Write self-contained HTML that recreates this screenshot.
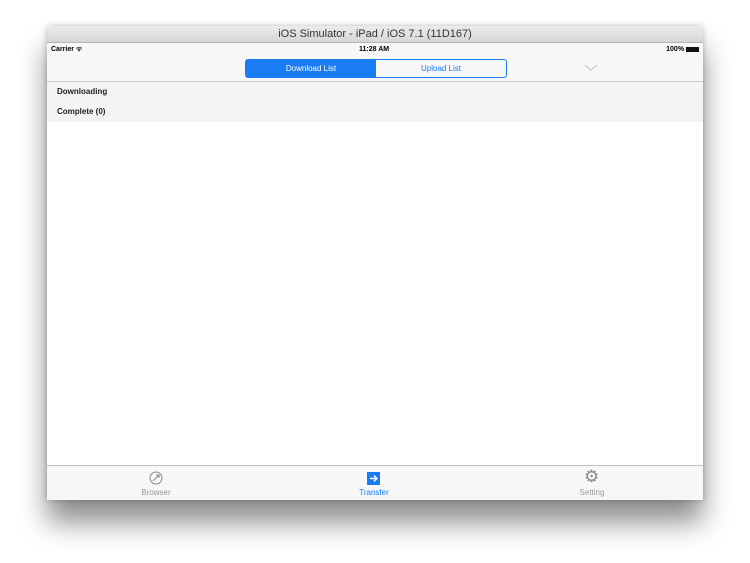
<!DOCTYPE html><html><head><style>
body{margin:0;width:750px;height:563px;background:#fff;font-family:"Liberation Sans",sans-serif;position:relative;overflow:hidden}
#w{position:absolute;left:47px;top:26px;width:656px;height:474px;background:#fff;box-shadow:0 22px 28px rgba(0,0,0,.45),0 0 6px rgba(0,0,0,.25);border-radius:4px 4px 0 0;overflow:hidden}
#t{height:16px;background:linear-gradient(#ececec,#d6d6d6);border-bottom:1px solid #b5b5b5;text-align:center;font-size:11px;line-height:16px;color:#333}
#s{height:13px;background:#f7f7f7;font-size:7px;font-weight:bold;line-height:13px;position:relative}
#n{height:25px;background:#f7f7f7;border-bottom:1px solid #c8c8c8;position:relative}
.seg{position:absolute;left:198px;top:3px;width:260px;height:17px;border:1px solid #1a7cf5;border-radius:3px;font-size:8px;line-height:17px;text-align:center}
.seg div{position:absolute;top:0;height:17px;width:130px}
.r{height:20px;background:#f4f4f4;font-size:8px;font-weight:bold;line-height:19px;padding-left:10px;color:#222}
#tb{position:absolute;left:0;top:439px;width:656px;height:35px;background:#f7f7f7;border-top:1px solid #c0c0c0;font-size:8px;color:#999}
.ti{position:absolute;top:22px;width:80px;text-align:center}
</style></head><body><div id="w">
<div id="t">iOS Simulator - iPad / iOS 7.1 (11D167)</div>
<div id="s"><span style="position:absolute;left:4px">Carrier ᯤ</span><span style="position:absolute;left:312px">11:28 AM</span><span style="position:absolute;right:4px">100% <span style="display:inline-block;width:13px;height:5px;background:#111;vertical-align:middle"></span></span></div>
<div id="n"><div class="seg"><div style="left:0;background:#1a7cf5;color:#fff">Download List</div><div style="left:130px;color:#1a7cf5">Upload List</div></div>
<svg style="position:absolute;left:537px;top:8px" width="14" height="8"><path d="M1 1 L7 6 L13 1" stroke="#ccc" fill="none" stroke-width="1.3"/></svg></div>
<div class="r">Downloading</div><div class="r">Complete (0)</div>
<div id="tb">
<svg style="position:absolute;left:102px;top:5px" width="14" height="14"><circle cx="7" cy="7" r="6" stroke="#888" fill="none"/><path d="M4 10 L10 4 M7 4 H10 V7" stroke="#888" fill="none"/></svg>
<div class="ti" style="left:69px">Browser</div>
<svg style="position:absolute;left:320px;top:6px" width="13" height="13"><rect width="13" height="13" fill="#1a7cf5"/><path d="M3 6.5 H10 M7 3.5 L10 6.5 L7 9.5" stroke="#fff" fill="none" stroke-width="1.4"/></svg>
<div class="ti" style="left:287px;color:#1a7cf5">Transfer</div>
<div style="position:absolute;left:537px;top:1px;font-size:17px;color:#888">⚙</div>
<div class="ti" style="left:505px">Setting</div>
</div></div></body></html>
